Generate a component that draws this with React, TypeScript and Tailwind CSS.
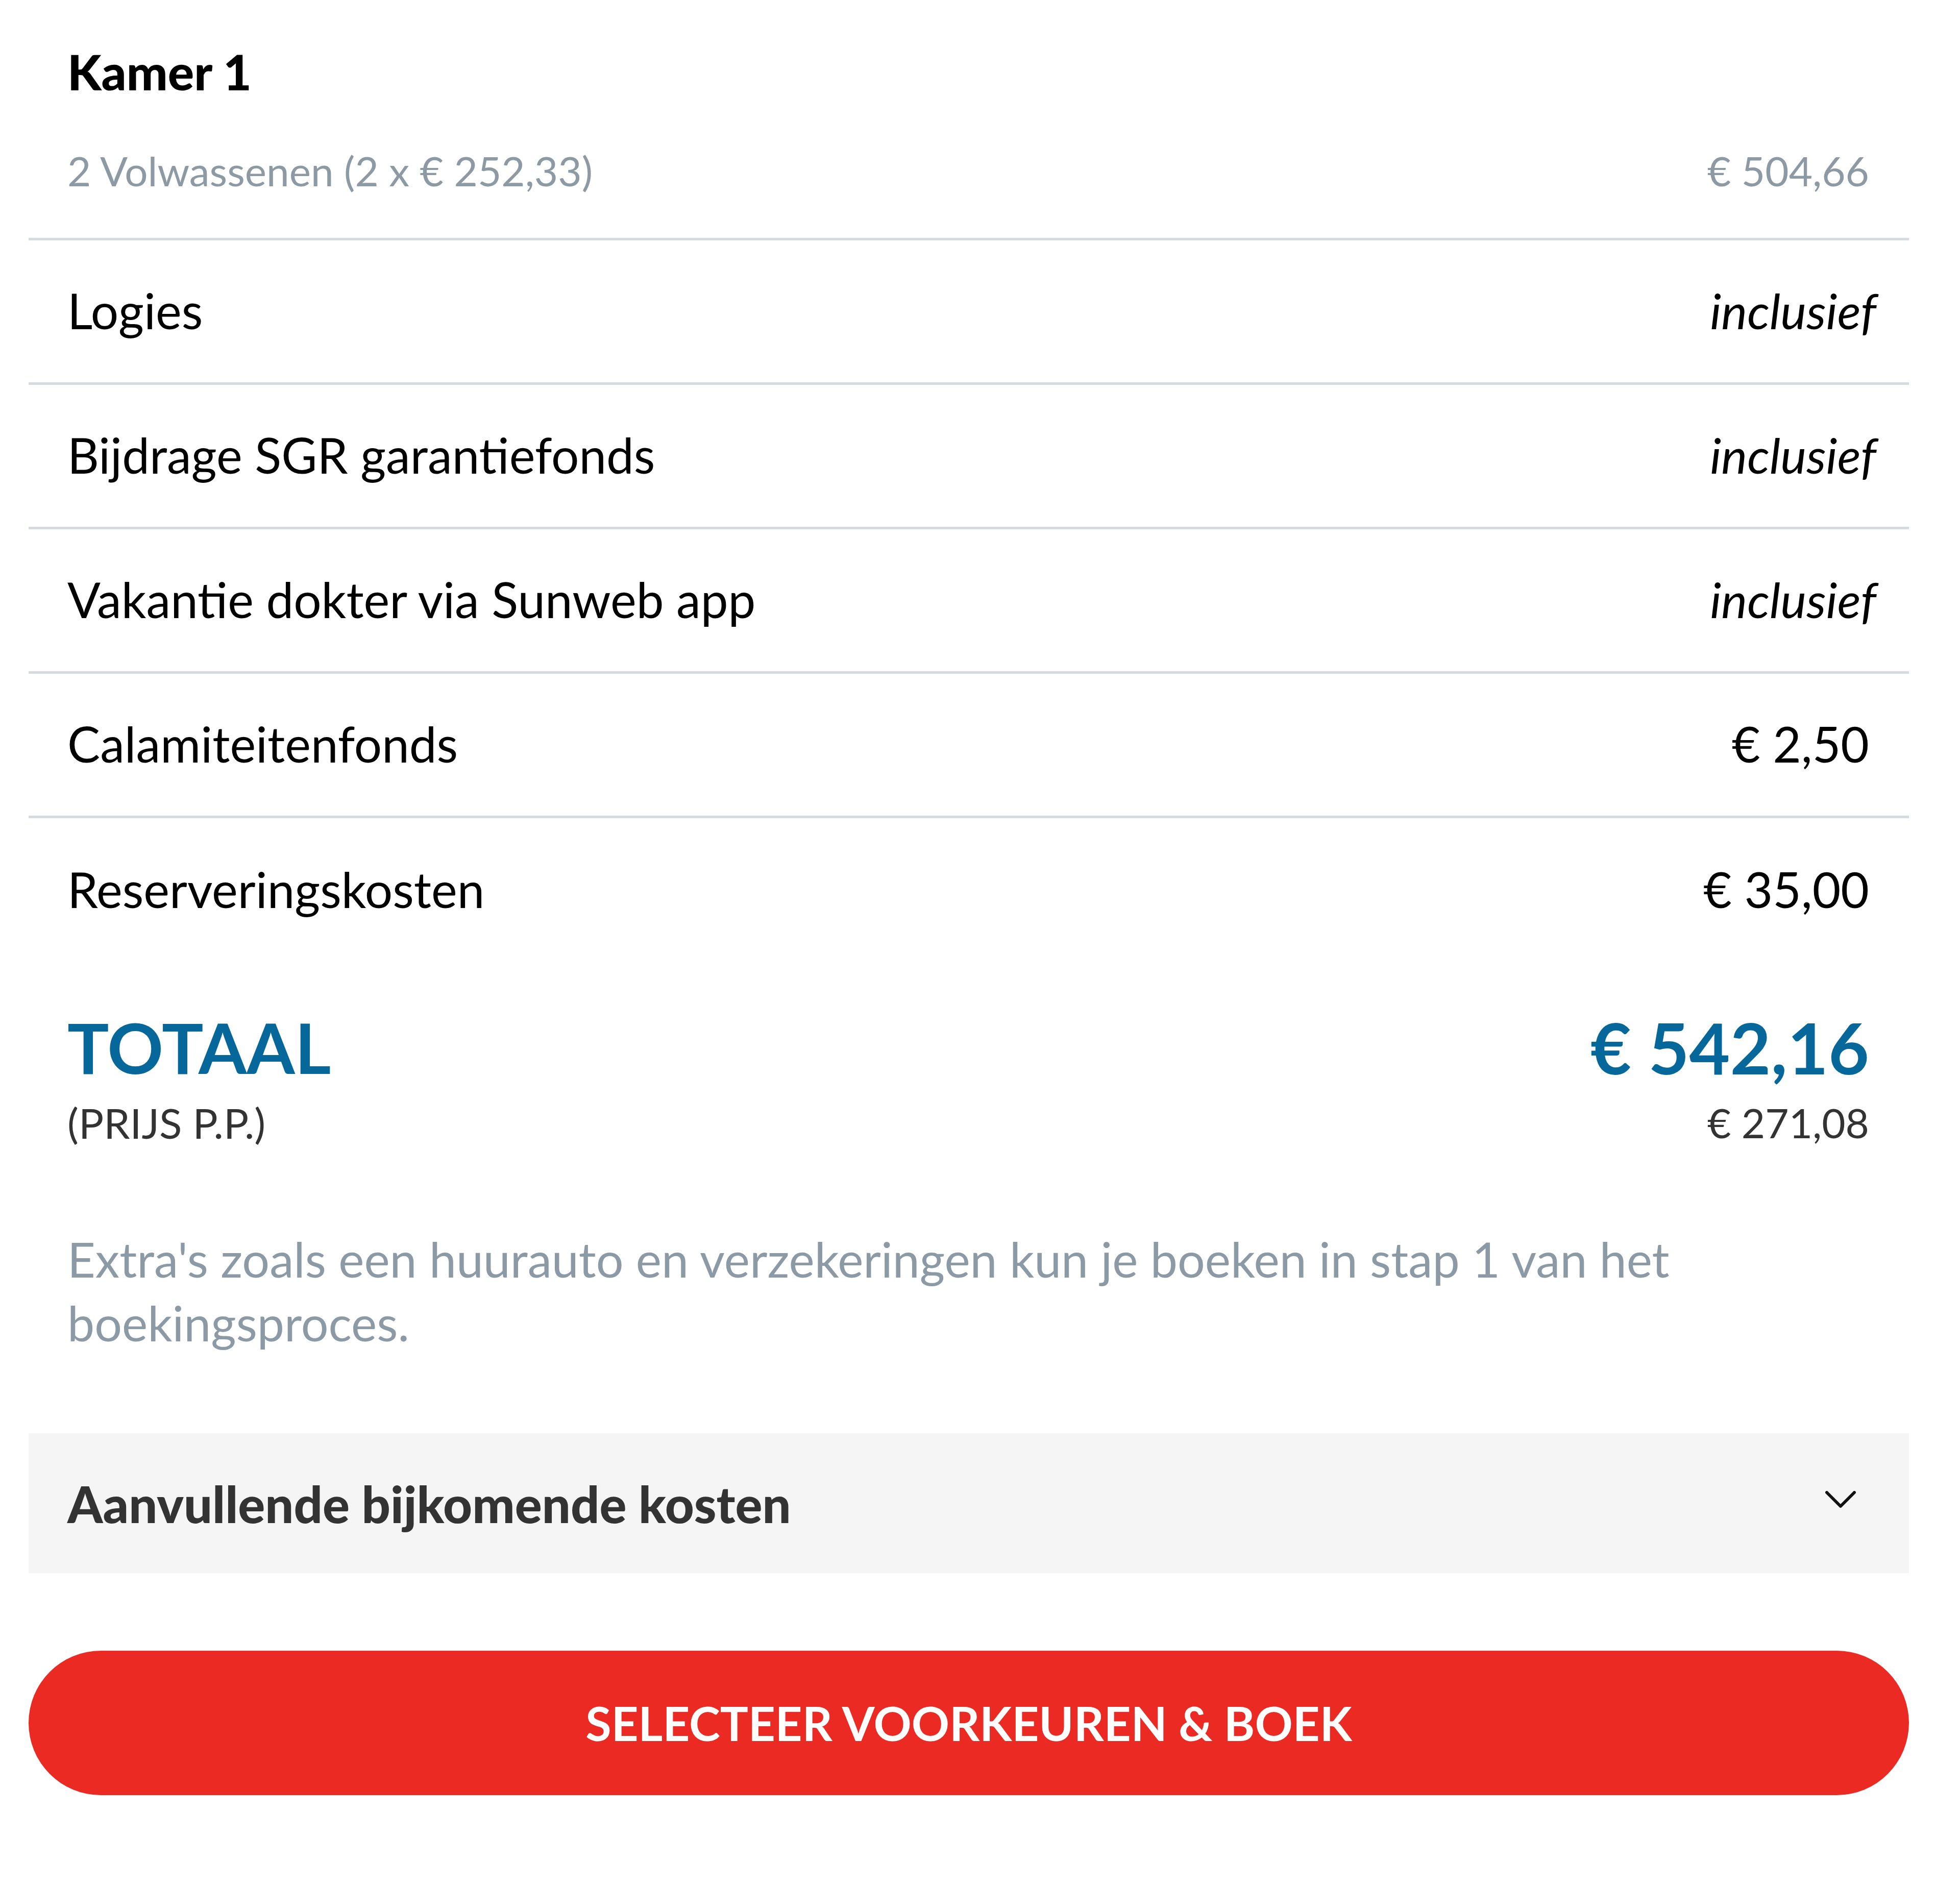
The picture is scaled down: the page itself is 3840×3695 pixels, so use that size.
const rows = [
  { label: "Logies", value: "inclusief", italic: true },
  { label: "Bijdrage SGR garantiefonds", value: "inclusief", italic: true },
  { label: "Vakantie dokter via Sunweb app", value: "inclusief", italic: true },
  { label: "Calamiteitenfonds", value: "€ 2,50", italic: false },
  { label: "Reserveringskosten", value: "€ 35,00", italic: false },
];

export default function App() {
  return (
    <div className="min-h-[3695px] bg-white pl-[56px] pr-[100px] pt-[82px] font-['Lato',sans-serif] text-black">
      {/* kamer header */}
      <div className="border-b-[5px] border-[#d5dce1] pl-[76px] pr-[78px] pb-[84px]">
        <h2 className="text-[96px] leading-[115px] font-black">Kamer 1</h2>
        <div className="mt-[89px] flex justify-between text-[80px] leading-[96px] text-[#8d9aa3]">
          <span>2 Volwassenen (2 x € 252,33)</span>
          <span>€ 504,66</span>
        </div>
      </div>

      {rows.map((r, i) => (
        <div
          key={r.label}
          className={
            "flex h-[283px] items-center justify-between pl-[76px] pr-[78px] pb-[6px] text-[96px] leading-[115px] " +
            (i < rows.length - 1 ? "border-b-[5px] border-[#d5dce1]" : "")
          }
        >
          <span>{r.label}</span>
          <span className={r.italic ? "-mr-[14px] italic" : ""}>{r.value}</span>
        </div>
      ))}

      {/* totaal */}
      <div className="mt-[84px] flex justify-between pl-[76px] pr-[78px]">
        <div className="flex flex-col">
          <span className="text-[136px] leading-[163px] font-bold text-[#05679a]">TOTAAL</span>
          <span className="mt-[18px] text-[82px] leading-[96px] text-[#333333]">(PRIJS P.P.)</span>
        </div>
        <div className="flex flex-col items-end">
          <span className="text-[138px] leading-[163px] font-bold text-[#05679a]">€ 542,16</span>
          <span className="mt-[18px] text-[80px] leading-[96px] text-[#333333]">€ 271,08</span>
        </div>
      </div>

      <p className="mt-[157px] pl-[76px] pr-[78px] text-[95px] leading-[125px] text-[#8b9aa4]">
        Extra's zoals een huurauto en verzekeringen kun je boeken in stap 1 van het boekingsproces.
      </p>

      {/* accordion */}
      <div className="mt-[154px] flex h-[274px] items-center justify-between bg-[#f5f5f5] pl-[76px] pr-[104px]">
        <span className="text-[99px] leading-[115px] font-black text-[#333333]">Aanvullende bijkomende kosten</span>
        <svg width="60" height="34" viewBox="0 0 60 34" className="-mt-[14px]">
          <path d="M3 3 L30 30 L57 3" fill="none" stroke="#111" strokeWidth="6" strokeLinecap="round" strokeLinejoin="round" />
        </svg>
      </div>

      <button className="mt-[152px] flex h-[283px] w-full items-center justify-center rounded-full bg-[#eb2a24] text-[92px] leading-[113px] font-bold text-white">
        SELECTEER VOORKEUREN &amp; BOEK
      </button>
    </div>
  );
}
